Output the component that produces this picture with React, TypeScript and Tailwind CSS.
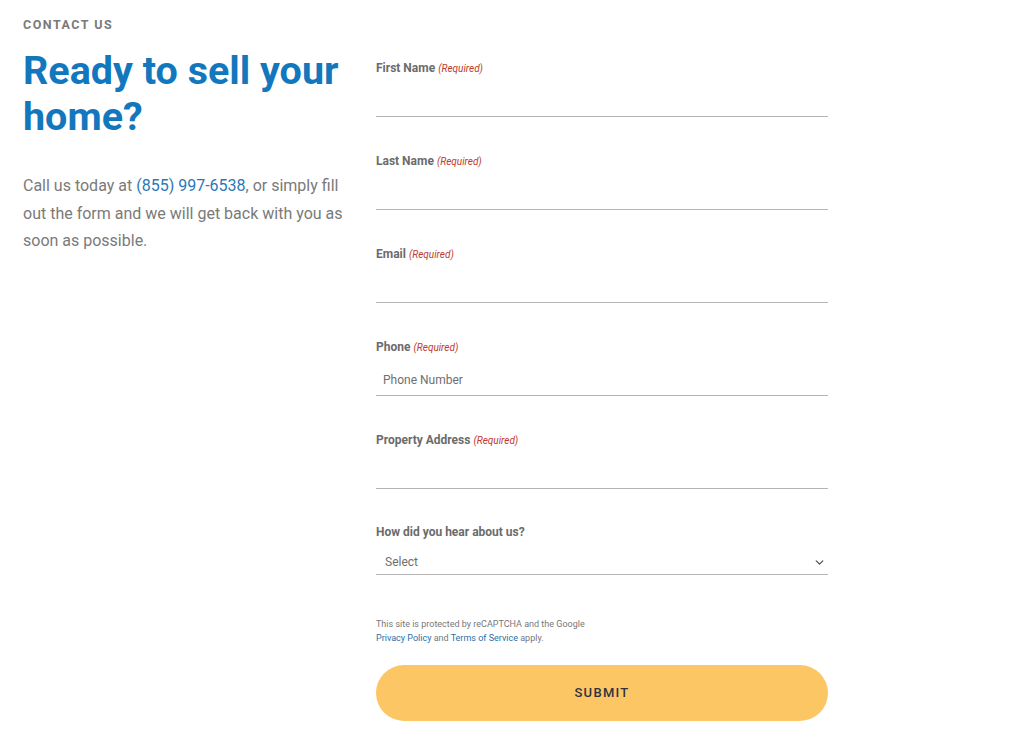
import { ChevronDown } from 'lucide-react';

const fields = [
  { label: 'First Name', required: true },
  { label: 'Last Name', required: true },
  { label: 'Email', required: true },
  { label: 'Phone', required: true, placeholder: 'Phone Number' },
  { label: 'Property Address', required: true },
];

function FieldLabel({ text, required }: { text: string; required?: boolean }) {
  return (
    <label className="flex h-[15px] items-baseline text-[12px] leading-[15px] font-bold text-[#6b6b6b]">
      {text}
      {required && <span className="ml-[3px] text-[10px] leading-[15px] font-normal italic text-[#c0392b]">(Required)</span>}
    </label>
  );
}

export default function App() {
  return (
    <div className="min-h-[733px] w-[1024px] bg-white font-['Roboto',sans-serif]">
      <div className="flex pl-[23px]">
        {/* Left column: intro text */}
        <div className="w-[330px] pt-[18px]">
          <p className="text-[12.5px] leading-[14px] font-bold tracking-[0.12em] text-[#7a7a7a]">CONTACT US</p>
          <h1 className="mt-[16px] text-[39.5px] leading-[46px] font-bold text-[#1277bd]">
            Ready to sell your home?
          </h1>
          <p className="mt-[32px] text-[16px] leading-[27.5px] text-[#7a7a7a]">
            Call us today at <a className="text-[#2a78b8]">(855) 997-6538</a>, or simply fill out the form and we will get back with you as soon as possible.
          </p>
        </div>

        {/* Right column: form */}
        <form className="ml-[23px] w-[452px] pt-[61px]">
          {fields.map((f) => (
            <div key={f.label} className="mb-[37px]">
              <FieldLabel text={f.label} required={f.required} />
              <input
                placeholder={f.placeholder}
                className="mt-[9px] block h-[32px] w-full border-b border-[#b5b5b5] px-[7px] text-[12px] text-[#555] placeholder:text-[#6f6f6f] outline-none"
              />
            </div>
          ))}

          <div className="-mt-px">
            <FieldLabel text="How did you hear about us?" />
            <div className="mt-[6px] flex h-[29px] w-full items-center justify-between border-b border-[#b5b5b5] px-[9px] pt-[4px] pr-[2px] text-[12px] text-[#6f6f6f]">
              <span>Select</span>
              <ChevronDown size={13} strokeWidth={2.5} className="text-[#555]" />
            </div>
          </div>

          <div className="mt-[42px] text-[9px] leading-[14px] text-[#777]">
            <p>This site is protected by reCAPTCHA and the Google</p>
            <p>
              <a className="text-[#2a6fa8]">Privacy Policy</a> and <a className="text-[#2a6fa8]">Terms of Service</a> apply.
            </p>
          </div>

          <button
            type="button"
            className="mt-[20px] flex h-[56px] w-full items-center justify-center rounded-full bg-[#fdc665] text-[13px] font-medium tracking-[0.1em] text-[#2d3340]"
          >
            SUBMIT
          </button>
        </form>
      </div>
    </div>
  );
}
